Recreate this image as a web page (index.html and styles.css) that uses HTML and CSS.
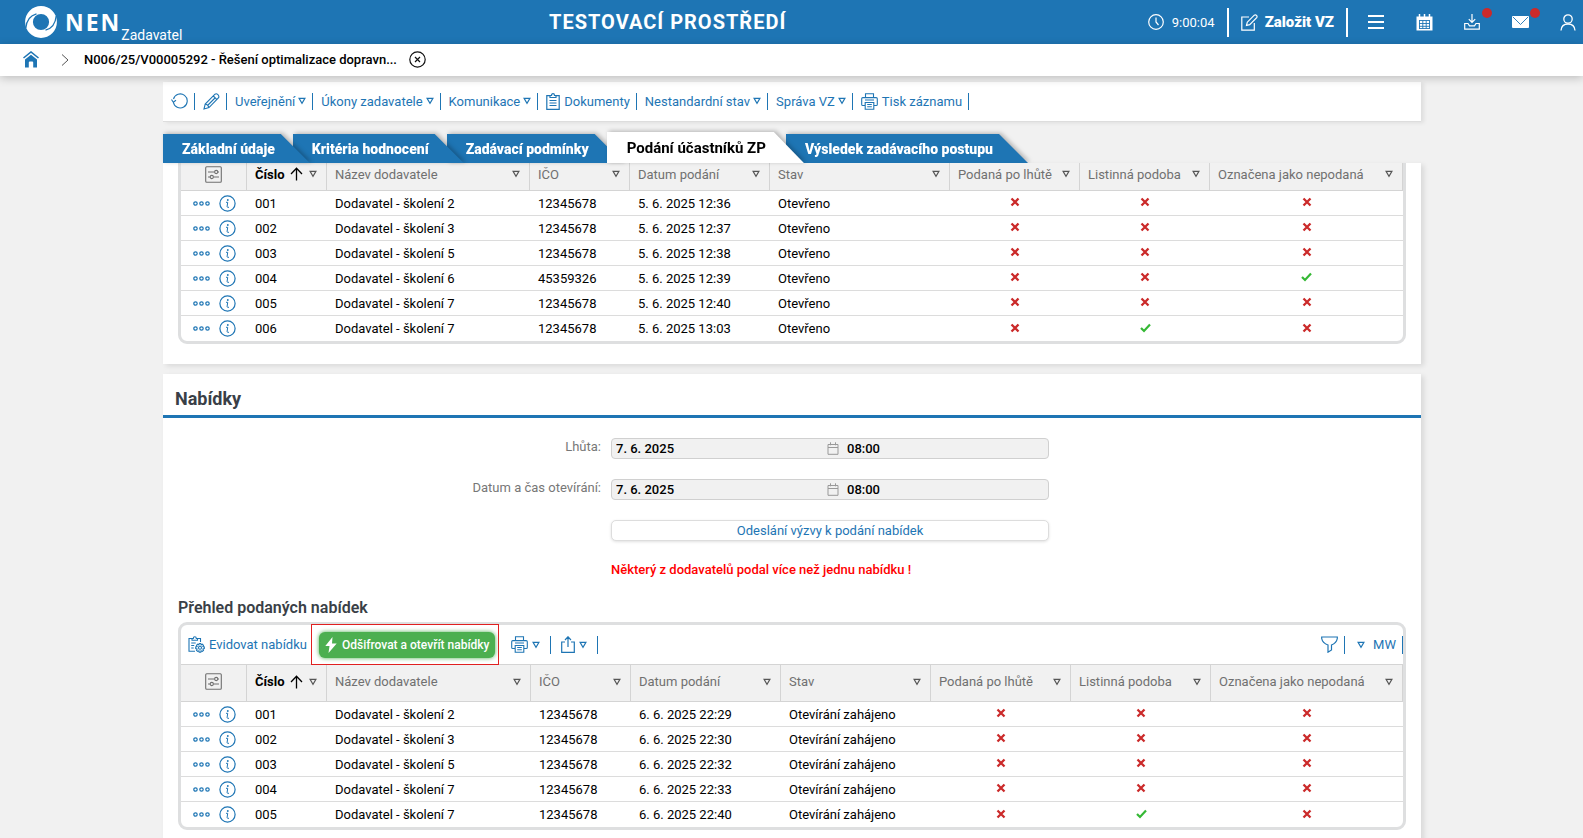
FILE: index.html
```
<!DOCTYPE html>
<html lang="cs">
<head>
<meta charset="utf-8">
<title>NEN – Podání účastníků ZP</title>
<link rel="stylesheet" href="styles.css">
</head>
<body>
<svg class="sprite" aria-hidden="true">
  <symbol id="i-tri" viewBox="0 0 9 8"><path d="M1.200 1h6.600L4.500 6.600z" fill="none" stroke="currentColor" stroke-width="1.300"/></symbol>
  <symbol id="i-x" viewBox="0 0 10 10"><path d="M1.500 1.500l7 7M8.500 1.500l-7 7" fill="none" stroke="#cb2a2a" stroke-width="2.300"/></symbol>
  <symbol id="i-ok" viewBox="0 0 11 10"><path d="M1 5l3 3 6-6.500" fill="none" stroke="#35b835" stroke-width="2.200"/></symbol>
  <symbol id="i-dots" viewBox="0 0 17 5"><g fill="none" stroke="currentColor" stroke-width="1.200"><circle cx="2.500" cy="2.500" r="1.700"/><circle cx="8.500" cy="2.500" r="1.700"/><circle cx="14.500" cy="2.500" r="1.700"/></g></symbol>
  <symbol id="i-info" viewBox="0 0 17 17"><g fill="none" stroke="currentColor"><circle cx="8.500" cy="8.500" r="7.600" stroke-width="1.200"/><path d="M7 7.300h1.700l-.6 4.200q0 .8.700.8h1.200"/></g><circle cx="8.800" cy="5" r=".9" fill="currentColor"/></symbol>
  <symbol id="i-set" viewBox="0 0 17 17"><g fill="none" stroke="currentColor" stroke-width="1.100"><rect x=".7" y=".7" width="15.600" height="15.600" rx="1"/><path d="M3 6h6.500M13 6h1M3 11h2M8.500 11H14"/><circle cx="11.200" cy="6" r="1.600"/><circle cx="6.800" cy="11" r="1.600"/></g></symbol>
  <symbol id="i-up" viewBox="0 0 13 14"><path d="M6.500 13.500V1.500M1 7l5.500-5.700L12 7" fill="none" stroke="currentColor" stroke-width="1.300"/></symbol>
  <symbol id="i-print" viewBox="0 0 17 17"><g fill="none" stroke="currentColor" stroke-width="1.100"><path d="M4.500 4.500V.8h8v3.700M4 7h9M4 12.500H1.800Q.7 12.500.7 11.400V5.700Q.7 4.600 1.800 4.600h13.400q1.100 0 1.100 1.100v5.700q0 1.100-1.100 1.100H13"/><path d="M4.200 9.500h8.600v6.700H4.200zM6.200 11.500h4.600M6.200 13.700h4.600"/></g></symbol>
  <symbol id="i-cal" viewBox="0 0 11 13"><path d="M.5 2.500h10v9.800H.5zM.5 5.500h10M3 .3v3M8 .3v3" fill="none" stroke="currentColor"/></symbol>
</svg>

<header class="topbar">
  <a class="brand" href="#">
    <svg width="32" height="32" viewBox="0 0 32 32"><circle cx="16" cy="16" r="12" fill="none" stroke="#fff" stroke-width="7.800"/><path d="M.8 22C1.500 14.500 5 9.500 11.500 7.800M31.200 10C30.500 17.500 27 22.500 20.500 24.200" fill="none" stroke="#1e75b4" stroke-width="1.300"/></svg>
    <span class="brand-name">NEN</span><span class="brand-role">Zadavatel</span>
  </a>
  <div class="env">TESTOVACÍ PROSTŘEDÍ</div>
  <div class="top-actions">
    <span class="clock"><svg width="16" height="16" viewBox="0 0 16 16"><g fill="none" stroke="#fff" stroke-width="1.200"><circle cx="8" cy="8" r="7.300"/><path d="M8 3.500V8l2.500 3"/></g></svg>9:00:04</span>
    <button class="create"><svg width="17" height="17" viewBox="0 0 17 17"><g fill="none" stroke="#fff" stroke-width="1.200"><path d="M8 3H.8v13.200h12.500V9"/><path d="M5.500 11.500l.8-3.300L13.300 1.200q1.200-.8 2.200.2t.2 2.200L8.700 10.600z"/></g></svg>Založit VZ</button>
    <button class="icon-btn" aria-label="Menu"><svg width="16" height="16" viewBox="0 0 16 16"><path d="M0 2h16M0 8h16M0 14h16" stroke="#fff" stroke-width="2"/></svg></button>
    <button class="icon-btn" aria-label="Kalendář"><svg width="17" height="17" viewBox="0 0 17 17"><path d="M.5 2.500h16v14H.5z" fill="#fff"/><path d="M3.500 0v4M8.500 0v4M13.500 0v4" stroke="#fff" stroke-width="1.500"/><path d="M3 6.500h11M3 9.500h11M3 12.300h11M3 14.500h11M3.500 6.500v8M6.800 6.500v8M10.200 6.500v8M13.500 6.500v8" stroke="#1e75b4" stroke-width=".9"/></svg></button>
    <button class="icon-btn" aria-label="Stažení"><svg width="16" height="16" viewBox="0 0 16 16"><path d="M8 0v8M4.800 5.200L8 8.400l3.200-3.200M4 9.500H.7v5.700h14.600V9.500H12l-1.500 2.300h-5z" fill="none" stroke="#fff" stroke-width="1.200"/></svg><i class="dot"></i></button>
    <button class="icon-btn" aria-label="Zprávy"><svg width="17" height="12" viewBox="0 0 17 12"><rect width="17" height="12" rx="1" fill="#fff"/><path d="M1 1l7.500 7.500L16 1" fill="none" stroke="#1e75b4" stroke-width=".9"/></svg><i class="dot"></i></button>
    <button class="icon-btn" aria-label="Uživatel"><svg width="16" height="17" viewBox="0 0 16 17"><g fill="none" stroke="#fff" stroke-width="1.300"><circle cx="8" cy="5" r="4.200"/><path d="M1 16.500Q1.500 10 8 10t7 6.500"/></g></svg></button>
  </div>
</header>

<nav class="crumbs">
  <a href="#" aria-label="Domů"><svg width="16" height="17" viewBox="0 0 16 17"><path d="M.5 7L8 1l7.500 6" fill="none" stroke="#1e75b4" stroke-width="1.600"/><path d="M2 8.500L8 3.800l6 4.700V16.500h-3.800V11.500q0-1-1-1H6.800q-1 0-1 1v5H2z" fill="#1e75b4"/></svg></a>
  <svg class="chev" width="8" height="12" viewBox="0 0 8 12"><path d="M1 .5L7 6l-6 5.500" fill="none" stroke="#555"/></svg>
  <span class="crumb">N006/25/V00005292 - Řešení optimalizace dopravn...</span>
  <button class="close" aria-label="Zavřít"><svg width="17" height="17" viewBox="0 0 17 17"><g fill="none" stroke="#111" stroke-width="1.200"><circle cx="8.500" cy="8.500" r="7.700"/><path d="M6 6l5 5M11 6l-5 5"/></g></svg></button>
</nav>

<main class="page">
  <div class="toolbar">
    <button class="tool" aria-label="Obnovit"><svg width="17" height="16" viewBox="0 0 17 16"><path d="M2.300 9a7 7 0 1 0 .2-3M.5 6.500l1.800 2.800 2.700-2" fill="none" stroke="currentColor" stroke-width="1.100"/></svg></button>
    <button class="tool" aria-label="Upravit"><svg width="17" height="17" viewBox="0 0 17 17"><g fill="none" stroke="currentColor" stroke-width="1.100"><path d="M1 16l1.200-5L12 1.200q1.400-1 2.900.5t.7 3L6 14.600zM10.300 3l3.700 3.700M2.200 11Q5 11.500 6 14.600M4.500 12.500l7.500-7.500"/></g></svg></button>
    <button class="tool">Uveřejnění<svg class="tri"><use href="#i-tri"/></svg></button>
    <button class="tool">Úkony zadavatele<svg class="tri"><use href="#i-tri"/></svg></button>
    <button class="tool">Komunikace<svg class="tri"><use href="#i-tri"/></svg></button>
    <button class="tool lead"><svg width="14" height="17" viewBox="0 0 14 17"><g fill="none" stroke="currentColor" stroke-width="1.200"><path d="M4 2.600H.8v13.700h12.400V2.600H10"/><path d="M4 4.500V2.500h1.500Q5.500.7 7 .7t1.500 1.800H10v2zM3.500 7.500h7M3.500 10h7M3.500 12.500h7"/></g></svg>Dokumenty</button>
    <button class="tool">Nestandardní stav<svg class="tri"><use href="#i-tri"/></svg></button>
    <button class="tool">Správa VZ<svg class="tri"><use href="#i-tri"/></svg></button>
    <button class="tool lead"><svg width="17" height="17"><use href="#i-print"/></svg>Tisk záznamu</button>
  </div>

  <div class="tabs" role="tablist">
    <div class="tab t1"><button role="tab">Základní údaje</button></div>
    <div class="tab t2"><button role="tab">Kritéria hodnocení</button></div>
    <div class="tab t3"><button role="tab">Zadávací podmínky</button></div>
    <div class="tab active"><button role="tab" aria-selected="true">Podání účastníků ZP</button></div>
    <div class="tab t5"><button role="tab">Výsledek zadávacího postupu</button></div>
  </div>

  <section class="panel first">
    <div class="grid-frame scrolled"><table class="grid compact" id="participants"></table></div>
  </section>

  <section class="panel">
    <h2>Nabídky</h2>
    <div class="form">
      <label for="d1">Lhůta:</label>
      <div class="field"><input id="d1" value="7. 6. 2025" readonly><svg width="12" height="13"><use href="#i-cal"/></svg><input aria-label="Lhůta, čas" value="08:00" readonly></div>
      <label for="d2">Datum a čas otevírání:</label>
      <div class="field"><input id="d2" value="7. 6. 2025" readonly><svg width="12" height="13"><use href="#i-cal"/></svg><input aria-label="Čas otevírání" value="08:00" readonly></div>
      <button class="wide">Odeslání výzvy k podání nabídek</button>
      <p class="warning">Některý z dodavatelů podal více než jednu nabídku !</p>
    </div>
    <h3>Přehled podaných nabídek</h3>
    <div class="grid-frame">
      <div class="grid-tools">
        <button class="gt"><svg width="17" height="17" viewBox="0 0 17 17"><g fill="none" stroke="currentColor" stroke-width="1.100"><path d="M4 2.500H1v12.800h6M9.500 2.500h3v3.500M4 4.300v-1.800h1.300Q5.300.7 6.800.7t1.500 1.800h1.200v1.800zM3.200 7h4.500M3.200 9.500h3M3.200 12h2.500"/><circle cx="12" cy="11.800" r="1.500"/><path d="M11.200 7.500h1.600l.3 1.400 1.300-.7 1.100 1.100-.6 1.300 1.400.4v1.600l-1.400.4.600 1.300-1.100 1.100-1.300-.6-.3 1.400h-1.600l-.3-1.400-1.300.6-1.100-1.100.6-1.300-1.400-.4V11l1.400-.4-.6-1.300 1.100-1.100 1.300.7z"/></g></svg>Evidovat nabídku</button>
        <div class="highlight"><button class="decrypt"><svg width="12" height="16" viewBox="0 0 12 16"><path d="M7.500 0L.3 9h4.200L3.500 16 11.700 6.500H7z" fill="#fff"/></svg>Odšifrovat a otevřít nabídky</button></div>
        <button class="gt sep" aria-label="Tisk"><svg width="17" height="17"><use href="#i-print"/></svg><svg class="tri"><use href="#i-tri"/></svg></button>
        <button class="gt sep" aria-label="Export"><svg width="14" height="17" viewBox="0 0 14 17"><path d="M4 6H.7v10.300h12.600V6H10M7 11V1M4 4l3-3.200L10 4" fill="none" stroke="currentColor" stroke-width="1.200"/></svg><svg class="tri"><use href="#i-tri"/></svg></button>
        <span class="grow"></span>
        <button class="gt filter" aria-label="Filtr"><svg width="17" height="17" viewBox="0 0 17 17"><path d="M.7 1h15.600v1.500Q15.500 7 10.500 9v5L7 16.200V9Q1.500 7 .7 2.500z" fill="none" stroke="currentColor" stroke-width="1.200"/></svg></button>
        <button class="gt view"><svg class="tri"><use href="#i-tri"/></svg>MW</button>
      </div>
      <table class="grid" id="offers"></table>
    </div>
  </section>
</main>
<script src="app.js"></script>
</body>
</html>
```

FILE: styles.css
```
* { box-sizing: border-box; }
body {
  margin: 0;
  background: #f1f1f1;
  font-family: Roboto, "Noto Sans", sans-serif;
  font-size: 13px;
  color: #000;
  height: 100vh;
  overflow: hidden;
}
button {
  border: 0;
  background: none;
  padding: 0;
  font: inherit;
  color: inherit;
  cursor: pointer;
}
svg { display: block; flex: none; }
.sprite { position: absolute; width: 0; height: 0; }
.tri { width: 8px; height: 8px; }

/* Top bar */
.topbar {
  display: grid;
  grid-template-columns: 524px auto 1fr;
  align-items: center;
  height: 44px;
  padding: 0 7px 0 25px;
  background: #1e75b4;
  color: #fff;
}
.brand { display: flex; align-items: center; height: 44px; color: #fff; text-decoration: none; }
.brand-name { margin-left: 8px; font: bold 23px "Noto Sans", sans-serif; letter-spacing: 2px; }
.brand-role { align-self: flex-end; margin-bottom: 1px; font-size: 14px; line-height: 16px; }
.env { font-size: 20px; font-weight: 700; letter-spacing: 1px; }
.top-actions { display: flex; align-items: center; justify-content: flex-end; }
.clock { display: flex; align-items: center; gap: 8px; margin-right: 12px; }
.create {
  display: flex;
  align-items: center;
  gap: 7px;
  height: 29px;
  padding: 0 12px;
  border: solid #fff;
  border-width: 0 2px;
  font-size: 15px;
  font-weight: 900;
}
.icon-btn { display: flex; align-items: center; justify-content: center; position: relative; width: 48px; height: 44px; }
.icon-btn:last-child { width: 24px; justify-content: flex-end; margin-left: 8px; }
.icon-btn:nth-child(3) { margin-left: 4px; }
.dot { position: absolute; top: 8px; right: 4px; width: 10px; height: 10px; border-radius: 50%; background: #cb2a2a; }

/* Breadcrumbs */
.crumbs {
  display: flex;
  align-items: center;
  position: relative;
  height: 32px;
  padding: 0 0 1px 23px;
  background: #fff;
  box-shadow: 0 2px 10px rgba(0, 0, 0, .22);
}
.chev { margin: 0 15px 0 22px; }
.crumb { font-weight: 500; }
.close { margin-left: 12px; }

/* Page */
.page { padding: 6px 162px 0 163px; }
.toolbar {
  display: flex;
  align-items: center;
  height: 40px;
  padding: 0 0 1px 8px;
  background: #fff;
  border-bottom: 1px solid #ddd;
  box-shadow: 3px 1px 4px rgba(0, 0, 0, .08);
  color: #1e75b4;
}
.tool {
  display: flex;
  align-items: center;
  gap: 3px;
  height: 17px;
  margin-right: 8px;
  padding-right: 6px;
  border-right: 1px solid #1e75b4;
}
.tool.lead { gap: 4px; }

/* Tabs */
.tabs { display: flex; align-items: flex-end; height: 41px; position: relative; }
.tab {
  position: relative;
  margin-right: -17px;
  filter: drop-shadow(2px -1px 2px rgba(0, 0, 0, .25));
}
.tab button {
  display: block;
  height: 29px;
  padding: 1px 35px 0 19px;
  background: #1e75b4;
  color: #fff;
  font-size: 14px;
  font-weight: 900;
  clip-path: polygon(0 0, calc(100% - 29px) 0, 100% 100%, 0 100%);
}
.tab.active { z-index: 5; margin-right: -18px; }
.tab.active button {
  height: 31px;
  padding: 0 38px 0 20px;
  background: #fff;
  color: #000;
  font-size: 15px;
  font-weight: 700;
  clip-path: polygon(0 0, calc(100% - 30px) 0, 100% 100%, 0 100%);
}
.t1 { z-index: 3; }
.t2 { z-index: 2; }
.t3 { z-index: 1; }

/* Panels */
.panel {
  margin-bottom: 10px;
  padding-bottom: 20px;
  background: #fff;
  box-shadow: 3px 2px 5px rgba(0, 0, 0, .1);
}
.panel.first { position: relative; overflow: hidden; }
.panel h2 {
  margin: 0;
  height: 44px;
  padding: 5px 12px 0;
  border-bottom: 3px solid #1e75b4;
  color: #3a3f47;
  font-size: 18px;
  line-height: 40px;
}
.panel h3 {
  margin: 0;
  padding: 19px 15px 4px;
  color: #3a3f47;
  font-size: 16px;
  font-weight: 600;
  line-height: 20px;
}
.form {
  display: grid;
  grid-template-columns: 438px 438px;
  column-gap: 10px;
  row-gap: 20px;
  padding-top: 20px;
}
.form label { justify-self: end; color: #777; line-height: 17px; }
.field {
  display: flex;
  align-items: center;
  height: 21px;
  border: 1px solid #d0d0d0;
  border-radius: 4px;
  background: #f1f1f1;
}
.field svg { margin-right: 4px; color: #999; }
.field input {
  width: 215px;
  min-width: 0;
  padding: 0 4px;
  border: 0;
  background: none;
  font: 500 13px Roboto, sans-serif;
  color: #000;
}
.field input:first-child { flex: none; }
.wide, .warning { grid-column: 2; }
.wide {
  height: 21px;
  border: 1px solid #ddd;
  border-radius: 5px;
  background: #fff;
  box-shadow: 0 1px 3px rgba(0, 0, 0, .12);
  color: #1e75b4;
}
.warning { margin: 0; color: #f00; font-weight: 500; line-height: 18px; }

/* Data grids */
.grid-frame {
  margin: 0 15px;
  border: 3px solid #dedfe0;
  border-radius: 9px;
}
.scrolled { margin-top: -9px; }
.grid-tools {
  display: flex;
  align-items: center;
  height: 39px;
  padding-left: 7px;
  color: #1e75b4;
}
.gt { display: flex; align-items: center; gap: 4px; height: 18px; }
.highlight {
  position: relative;
  flex: none;
  margin: 0 12px 0 4px;
  padding: 7px 3px 6px 7px;
  border: 1px solid #e02020;
}
.decrypt {
  display: flex;
  align-items: center;
  gap: 5px;
  height: 26px;
  padding: 0 6px;
  border-radius: 6px;
  background: #4caf50;
  box-shadow: 0 0 4px #4caf50;
  color: #fff;
  font-size: 12px;
  font-weight: 500;
}
.sep { margin-right: 10px; padding-right: 10px; border-right: 1px solid #1e75b4; }
.grow { flex: 1; }
.filter { padding-right: 6px; border-right: 1px solid #1e75b4; }
.view { gap: 8px; margin-left: 12px; padding-right: 6px; border-right: 1px solid #1e75b4; }
.grid { width: 100%; border-collapse: separate; border-spacing: 0; table-layout: fixed; }
.grid th {
  height: 38px;
  padding: 0 8px 3px;
  border: solid #d4d4d4;
  border-width: 1px 1px 1px 0;
  background: #f1f1f1;
  color: #707070;
  font-weight: 400;
}
.grid.compact th { height: 34px; padding-bottom: 0; }
.grid th.sorted { color: #000; font-weight: 700; }
.th { display: flex; align-items: center; justify-content: space-between; white-space: nowrap; }
.th.center { justify-content: center; }
.th .tri { margin-right: 1px; color: #555; }
.grid td { height: 25px; padding: 0 8px; border-bottom: 1px solid #dcdcdc; }
.grid tr:last-child td { border-bottom: 0; }
.grid td svg { margin: 0 auto 2px; }
.row-tools { display: flex; align-items: center; gap: 9px; padding-left: 4px; color: #1e75b4; }
.grid .row-tools svg { margin: 0; }
.w66 { width: 66px; }
.w80 { width: 80px; }
.w100 { width: 100px; }
.w130 { width: 130px; }
.w140 { width: 140px; }
.w150 { width: 150px; }
.w180 { width: 180px; }
.w192 { width: 192px; }
.w193 { width: 193px; }
```

FILE: app.js
```
const icon = (id, w, h) => `<svg width="${w}" height="${h}"><use href="#i-${id}"/></svg>`;
const tri = `<svg class="tri"><use href="#i-tri"/></svg>`;
const heads = ["Číslo", "Název dodavatele", "IČO", "Datum podání", "Stav", "Podaná po lhůtě", "Listinná podoba", "Označena jako nepodaná"];

function fill(id, widths, rows) {
  const cols = widths.map(w => `<col${w ? ` class="w${w}"` : ""}>`).join("");
  const ths = heads.map((h, i) => i
    ? `<th><div class="th">${h}${tri}</div></th>`
    : `<th class="sorted"><div class="th">${h}${icon("up", 13, 14)}${tri}</div></th>`).join("");
  const body = rows.map(r => "<tr><td><div class=\"row-tools\">" + icon("dots", 17, 5) + icon("info", 17, 17) + "</div></td>" +
    r.map(c => `<td>${c === true ? icon("ok", 11, 10) : c === false ? icon("x", 10, 10) : c}</td>`).join("") + "</tr>").join("");
  document.getElementById(id).innerHTML =
    `<colgroup>${cols}</colgroup><thead><tr><th><div class="th center">${icon("set", 17, 17)}</div></th>${ths}</tr></thead><tbody>${body}</tbody>`;
}

const name = n => "Dodavatel - školení " + n;
fill("participants", [66, 80, 0, 100, 140, 180, 130, 130, 193], [
  ["001", name(2), "12345678", "5. 6. 2025 12:36", "Otevřeno", false, false, false],
  ["002", name(3), "12345678", "5. 6. 2025 12:37", "Otevřeno", false, false, false],
  ["003", name(5), "12345678", "5. 6. 2025 12:38", "Otevřeno", false, false, false],
  ["004", name(6), "45359326", "5. 6. 2025 12:39", "Otevřeno", false, false, true],
  ["005", name(7), "12345678", "5. 6. 2025 12:40", "Otevřeno", false, false, false],
  ["006", name(7), "12345678", "5. 6. 2025 13:03", "Otevřeno", false, true, false]
]);
fill("offers", [66, 80, 0, 100, 150, 150, 140, 140, 192], [
  ["001", name(2), "12345678", "6. 6. 2025 22:29", "Otevírání zahájeno", false, false, false],
  ["002", name(3), "12345678", "6. 6. 2025 22:30", "Otevírání zahájeno", false, false, false],
  ["003", name(5), "12345678", "6. 6. 2025 22:32", "Otevírání zahájeno", false, false, false],
  ["004", name(7), "12345678", "6. 6. 2025 22:33", "Otevírání zahájeno", false, false, false],
  ["005", name(7), "12345678", "6. 6. 2025 22:40", "Otevírání zahájeno", false, true, false]
]);
```
